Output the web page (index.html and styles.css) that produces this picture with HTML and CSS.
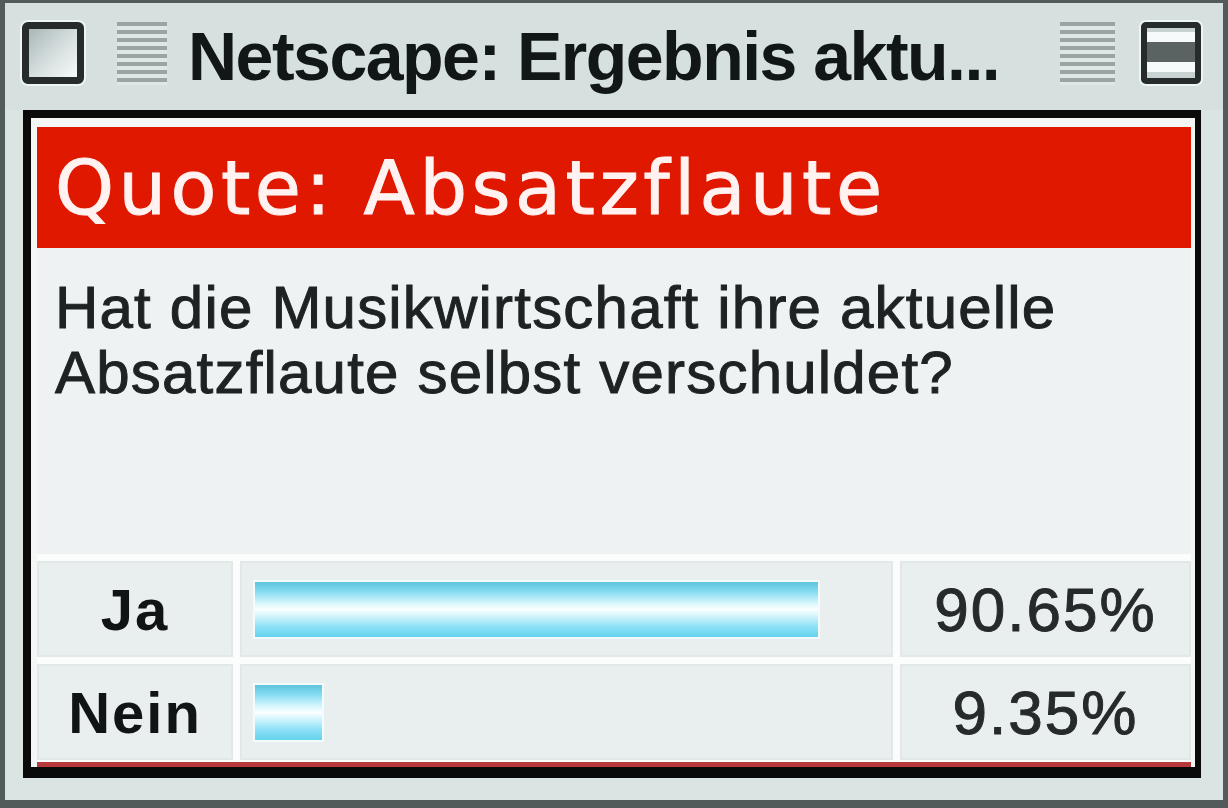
FILE: index.html
```html
<!DOCTYPE html>
<html lang="de">
<head>
  <meta charset="UTF-8" />
  <title>Netscape: Ergebnis aktuelle Quote</title>
  <link rel="stylesheet" href="styles.css">
</head>
<body>
  <div class="window">
    <!-- Mac OS title bar -->
    <div class="titlebar">
      <div class="close-box"></div>
      <div class="grip grip-left"></div>
      <div class="title">Netscape: Ergebnis aktu...</div>
      <div class="grip grip-right"></div>
      <div class="zoom-box"></div>
    </div>

    <div class="panel">
      <div class="panel-body">
        <div class="poll-header">Quote: Absatzflaute</div>
        <p class="question">Hat die Musikwirtschaft ihre aktuelle<br>Absatzflaute selbst verschuldet?</p>

        <div class="results">
          <div class="cell label">Ja</div>
          <div class="cell bar-cell"><div class="bar" style="width: 90.65%"></div></div>
          <div class="cell percent">90.65%</div>

          <div class="cell label">Nein</div>
          <div class="cell bar-cell"><div class="bar" style="width: 10.8%"></div></div>
          <div class="cell percent">9.35%</div>
        </div>
      </div>
    </div>
  </div>
</body>
</html>
```

FILE: styles.css
```css
html, body {
  margin: 0;
  padding: 0;
}

body {
  width: 1228px;
  height: 808px;
  overflow: hidden;
  background: #d9e3e3;
}

.window {
  box-sizing: border-box;
  width: 1228px;
  height: 808px;
  background: #dae4e3;
  border-style: solid;
  border-color: #525a5a;
  border-width: 3px 5px 8px 5px;
  padding-bottom: 22px;
  display: flex;
  flex-direction: column;
}

/* title bar */
.titlebar {
  box-sizing: border-box;
  height: 107px;
  padding: 19px 22px 0 17px;
  display: flex;
  align-items: flex-start;
  background: #d5e0df;
}

.close-box {
  box-sizing: border-box;
  width: 62px;
  height: 62px;
  margin-right: 33px;
  border: 7px solid #262c2c;
  border-radius: 6px;
  background: linear-gradient(135deg, #aab6b6 0%, #d4dddd 50%, #f6fafa 100%);
  box-shadow: 0 0 0 2px #eef4f4;
}

.grip {
  height: 63px;
  background: repeating-linear-gradient(to bottom, #9aa4a4 0, #9aa4a4 4px, #dfe7e7 4px, #dfe7e7 8px);
}

.grip-left {
  width: 50px;
}

.grip-right {
  width: 55px;
  margin-right: 26px;
}

.title {
  flex: 1;
  margin-left: 21px;
  padding-top: 3px;
  font-family: "Liberation Sans", Arial, sans-serif;
  font-weight: bold;
  font-size: 68px;
  line-height: 62px;
  letter-spacing: -1.5px;
  color: #111616;
  white-space: nowrap;
}

.zoom-box {
  box-sizing: border-box;
  width: 60px;
  height: 62px;
  border: 6px solid #262c2c;
  border-radius: 5px;
  background: linear-gradient(to bottom,
    #c8d2d2 0, #c8d2d2 4px,
    #f6fafa 4px, #f6fafa 14px,
    #5a6262 14px, #5a6262 34px,
    #f6fafa 34px, #f6fafa 44px,
    #c8d2d2 44px);
  box-shadow: 0 0 0 2px #eef4f4;
}

/* page content frame */
.panel {
  box-sizing: border-box;
  height: 668px;
  margin: 0 22px 0 18px;
  border-style: solid;
  border-color: #0a0a0a;
  border-width: 8px 6px 11px 8px;
  padding: 9px 4px 0 6px;
  background: #f4f6f6;
}

.panel-body {
  box-sizing: border-box;
  height: 100%;
  display: flex;
  flex-direction: column;
  background: #eef2f2;
  border-bottom: 5px solid #b8393c;
}

.poll-header {
  box-sizing: border-box;
  height: 121px;
  padding: 24px 0 0 18px;
  background: #e01800;
  color: #fff2f0;
  font-family: "DejaVu Sans", Verdana, sans-serif;
  font-size: 75px;
  line-height: 75px;
  letter-spacing: 4.5px;
  -webkit-text-stroke: 1px #fff2f0;
}

.question {
  margin: 27px 0 0 18px;
  font-family: "Liberation Sans", Arial, sans-serif;
  font-size: 60px;
  line-height: 65px;
  letter-spacing: 1.2px;
  color: #1e2222;
  -webkit-text-stroke: 1px #1e2222;
}

/* result table */
.results {
  margin-top: auto;
  display: grid;
  grid-template-columns: 196px 653px 1fr;
  grid-template-rows: 96px 96px;
  gap: 7px;
  padding: 7px 0 2px 0;
  background: #fbfdfd;
}

.cell {
  display: flex;
  align-items: center;
  background: #e9eeee;
  box-shadow: inset 0 0 0 2px #e2e8e8;
}

.label {
  justify-content: center;
  font-family: "Liberation Sans", Arial, sans-serif;
  font-weight: bold;
  font-size: 58px;
  letter-spacing: 2px;
  color: #101414;
}

.bar-cell {
  padding: 0 17px 0 15px;
}

.bar {
  height: 55px;
  background: linear-gradient(to bottom,
    #5ec4dc 0%, #86dcf2 18%, #d6f6fc 38%, #fbffff 50%,
    #d2f4fc 62%, #8ae0f6 82%, #66d2ec 100%);
  box-shadow: 0 0 0 2px #f4fbfc;
}

.percent {
  justify-content: center;
  font-family: "Liberation Sans", Arial, sans-serif;
  font-size: 62px;
  letter-spacing: 2px;
  color: #262a2a;
  -webkit-text-stroke: 1px #262a2a;
}
```
